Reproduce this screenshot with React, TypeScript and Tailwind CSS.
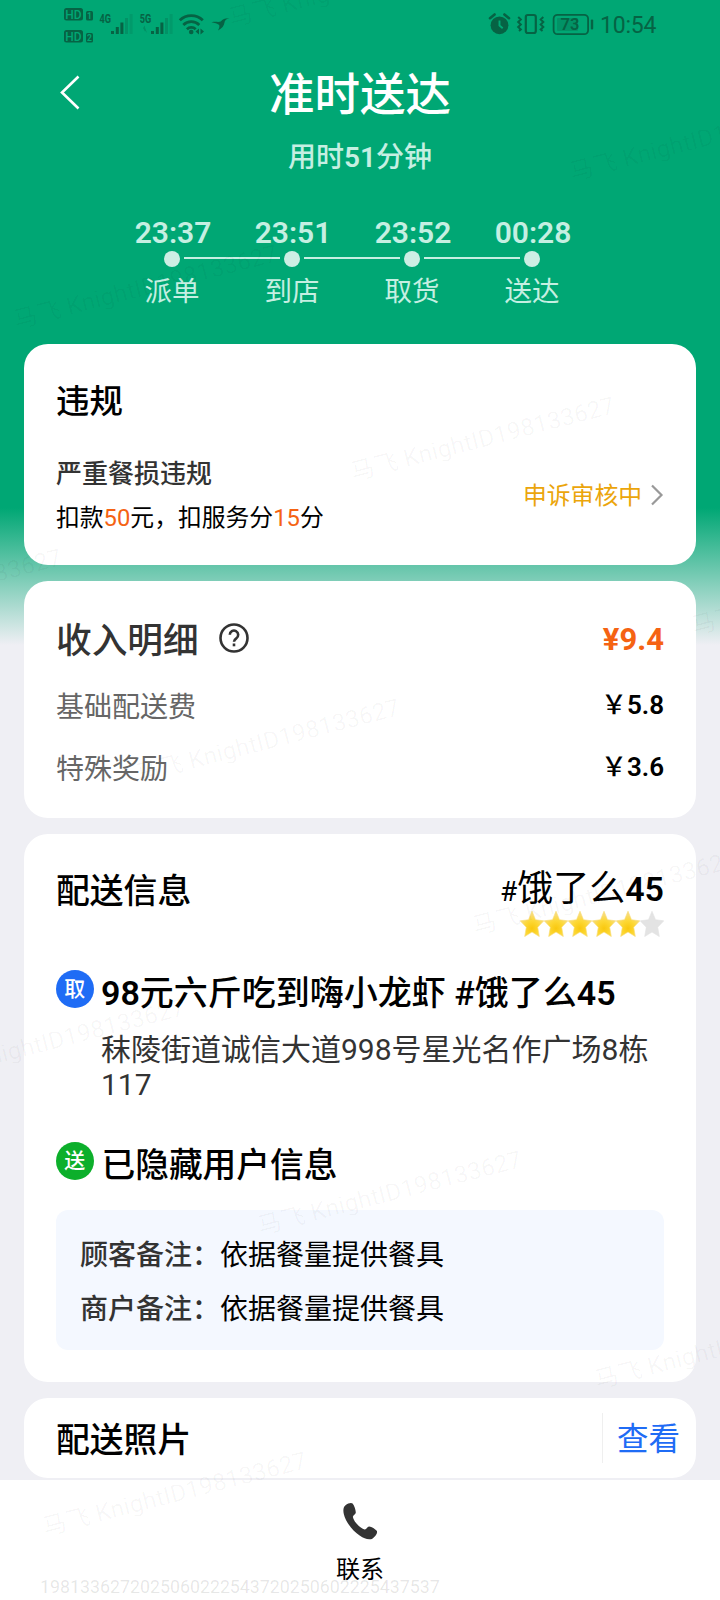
import React from "react";

const steps = [
  { time: "23:37", label: "派单" },
  { time: "23:51", label: "到店" },
  { time: "23:52", label: "取货" },
  { time: "00:28", label: "送达" },
];

const marks = [
  { x: 229, y: 19 },
  { x: 570, y: 173 },
  { x: 14, y: 321 },
  { x: 351, y: 473 },
  { x: -202, y: 625 },
  { x: 692, y: 627 },
  { x: 136, y: 775 },
  { x: 473, y: 927 },
  { x: -79, y: 1075 },
  { x: 258, y: 1227 },
  { x: 595, y: 1381 },
  { x: 43, y: 1528 },
];

const STAR = "M12 .2l3.500 7.500 8.300 1-6.100 5.700 1.600 8.200L12 18.600l-7.300 4 1.600-8.200L.2 8.700l8.300-1z";

function SignalBars({ x }: { x: number }) {
  return (
    <g>
      <rect x={x} y="31" width="3" height="3" />
      <rect x={x + 4.8} y="27" width="3" height="7" />
      <rect x={x + 9.4} y="22.5" width="3" height="11.5" />
      <rect x={x + 14} y="18" width="3" height="16" opacity=".3" />
      <rect x={x + 18.6} y="14" width="3" height="20" opacity=".18" />
    </g>
  );
}

function HdBadge({ y, sim }: { y: number; sim: string }) {
  return (
    <g>
      <rect x="64" y={y} width="19" height="12.5" rx="2.5" />
      <text x="73.5" y={y + 10.6} fontSize="12" fontWeight="500" textAnchor="middle" fill="#00a774">HD</text>
      <rect x="86" y={y + 3} width="7" height="9.5" rx="1.5" />
      <text x="89.5" y={y + 11} fontSize="8.5" fontWeight="700" textAnchor="middle" fill="#00a774">{sim}</text>
    </g>
  );
}

function StatusBar() {
  return (
    <div className="flex h-[60px] shrink-0 justify-between">
      <svg width="240" height="48" viewBox="0 0 240 48" fill="#066344" fontFamily="Roboto">
        <HdBadge y={8} sim="1" />
        <HdBadge y={30} sim="2" />
        <text x="99.5" y="23" fontSize="12.500" fontWeight="700" textLength="11.500" lengthAdjust="spacingAndGlyphs">4G</text>
        <SignalBars x={111} />
        <text x="139.800" y="23" fontSize="12.500" fontWeight="700" textLength="11.500" lengthAdjust="spacingAndGlyphs">5G</text>
        <path d="M143 28l2 -2.500v6zM147 33l-2 -2.500v-3z" opacity=".35" />
        <SignalBars x={151} />
        <g fill="none" stroke="#066344" strokeWidth="2.800">
          <path d="M179.800 20.300a16.500 16.500 0 0 1 23 0" />
          <path d="M183.300 24.900a11.500 11.500 0 0 1 16 0" />
          <path d="M186.900 29.200a6.400 6.400 0 0 1 8.800 0" />
        </g>
        <circle cx="191.200" cy="32" r="2.300" />
        <path d="M195.500 31.500l3.500-3v6zM204 31.500l-3.500-3v6z" />
        <path d="M211.500 22.300c4-1 7 .2 9.200-.8 2.300-2.800 5-3.500 8.800-3.200-3 .6-4.800 2-5 4.200-.4 3.200-2.500 6-6.500 8 1-2 1.800-3.700 1.200-5.500-2-1.500-4.500-2.200-7.700-2.700z" />
      </svg>
      <svg width="250" height="48" viewBox="470 0 250 48" fill="#066344" fontFamily="Roboto">
        <circle cx="499.500" cy="25.300" r="8.900" />
        <path d="M490 18.200l4.600-3.700M509 18.200l-4.600-3.700" stroke="#066344" strokeWidth="2.600" strokeLinecap="round" />
        <path d="M499.500 20.500v5l3.200 2.800" fill="none" stroke="#00a774" strokeWidth="1.900" />
        <rect x="525.800" y="15" width="10" height="18" rx="2" fill="none" stroke="#066344" strokeWidth="2.200" />
        <path d="M518.200 17l2.600 2.500-2.600 2.500 2.600 2.500-2.600 2.500 2.600 2.500-1.800 1.500M543.300 17l-2.600 2.500 2.600 2.500-2.600 2.500 2.600 2.500-2.600 2.500 1.800 1.500" fill="none" stroke="#066344" strokeWidth="2" />
        <rect x="553.600" y="14.800" width="34.500" height="19.400" rx="4" fill="none" stroke="#066344" strokeWidth="1.800" />
        <rect x="557" y="18" width="21" height="13" rx="1" opacity=".3" />
        <rect x="590.800" y="19.500" width="2.400" height="10" rx="1" />
        <text x="570" y="30.200" fontSize="16.500" fontWeight="600" textAnchor="middle">73</text>
        <text x="600" y="32.700" fontSize="23" textLength="56.500">10:54</text>
      </svg>
    </div>
  );
}

function Badge({ text, className }: { text: string; className: string }) {
  return (
    <span className={`flex size-[37.500px] shrink-0 items-center justify-center rounded-full pt-0.5 text-[21px] leading-none font-medium text-white ${className}`}>
      {text}
    </span>
  );
}

function Rating() {
  return (
    <div className="mt-px flex">
      {[0, 1, 2, 3, 4, 5].map((i) => (
        <svg key={i} width="24" height="26" viewBox="0 0 24 23" preserveAspectRatio="none">
          <defs>
            <radialGradient id="gold" cx=".5" cy=".68" r=".55">
              <stop offset="0" stopColor="#f9c80e" />
              <stop offset=".55" stopColor="#fdd835" />
              <stop offset="1" stopColor="#f8dc78" />
            </radialGradient>
          </defs>
          <path d={STAR} fill={i < 5 ? "url(#gold)" : "#e3e3e3"} stroke={i < 5 ? "#f8dc78" : "#e3e3e3"} strokeWidth=".6" />
        </svg>
      ))}
    </div>
  );
}

function FeeRow({ label, amount }: { label: string; amount: string }) {
  return (
    <div className="flex h-[62px] items-center justify-between">
      <span className="pt-1.5 text-[28px] text-[#666]">{label}</span>
      <span className="text-[26px] font-semibold">
        <span className="font-medium">￥</span>
        {amount}
      </span>
    </div>
  );
}

function NoteRow({ label, text }: { label: string; text: string }) {
  return (
    <div className="flex h-[54px] items-center text-[28px] whitespace-nowrap">
      <span className="font-medium text-[#333]">{label}</span>
      <span>{text}</span>
    </div>
  );
}

export default function App() {
  return (
    <div className="relative flex h-[1600px] w-[720px] flex-col overflow-hidden bg-[#efeff4] bg-[linear-gradient(180deg,#00a774_0px,#00a774_508px,#efeff4_645px)] font-[Roboto,'Noto_Sans_CJK_SC',sans-serif] leading-none text-black">
      <StatusBar />

      <header className="flex h-[284px] shrink-0 flex-col">
        <div className="flex h-[66px] items-center">
          <svg className="ml-[58px]" width="24" height="36" viewBox="0 0 24 36" fill="none" stroke="#fff" strokeWidth="2.600">
            <path d="M20.500 1.500L4 17.500l16.500 16" />
          </svg>
          <h1 className="mr-[82px] grow pt-1.5 text-center text-[45.500px] font-medium text-white">准时送达</h1>
        </div>
        <p className="mt-[17px] h-[30px] text-center text-[28px] leading-[30px] font-medium text-[#c5efe2]">
          用时<span className="font-semibold">51</span>分钟
        </p>
        <ol className="mt-[42px] ml-[112px] flex text-[#c5efe2]">
          {steps.map((s, i) => (
            <li key={s.time} className="flex w-[120px] flex-col items-center">
              <span className="ml-[2px] text-[30px] leading-[36px] font-semibold">{s.time}</span>
              <span className="flex h-4 w-full items-center pl-[52px]">
                <i className="size-4 shrink-0 rounded-full bg-[#cdeee4]" />
                {i < 3 && <i className="-mr-[48px] mb-[3px] ml-1 h-[2px] w-24 shrink-0 bg-[#c5efe2]" />}
              </span>
              <span className="mt-[10px] text-[27.500px] leading-[30px]">{s.label}</span>
            </li>
          ))}
        </ol>
      </header>

      <main className="flex grow flex-col gap-4 px-6">
        <section className="h-[221px] shrink-0 rounded-3xl bg-white px-8 pt-[38px]">
          <h2 className="text-[33.500px] leading-[40px] font-medium">违规</h2>
          <div className="mt-[29px] flex items-center justify-between">
            <div className="pt-px">
              <p className="text-[26px] leading-[44px] font-medium text-[#333]">严重餐损违规</p>
              <p className="text-[23.800px] leading-[44px]">
                扣款<span className="text-[#f56313]">50</span>元，扣服务分<span className="text-[#f56313]">15</span>分
              </p>
            </div>
            <div className="flex items-center text-[23.800px] text-[#eba50b]">
              <span className="pt-0.5">申诉审核中</span>
              <svg className="ml-[8px]" width="14" height="22" viewBox="0 0 14 22" fill="none" stroke="#999" strokeWidth="2.200">
                <path d="M2 1.500l9.500 9.500-9.500 9.500" />
              </svg>
            </div>
          </div>
        </section>

        <section className="h-[237px] shrink-0 rounded-3xl bg-white px-8 pt-[33px]">
          <div className="flex h-[50px] items-center justify-between">
            <h2 className="flex items-center text-[35.700px] font-medium text-[#333]">
              <span className="pt-[5px]">收入明细</span>
              <svg className="mb-px ml-[20px]" width="30" height="30" viewBox="0 0 30 30" fill="none" stroke="#333" strokeWidth="2.600">
                <circle cx="15" cy="15" r="13.500" />
                <path d="M10.800 11.800a4.200 4.200 0 1 1 6.500 3.500c-1.600 1-2.300 1.700-2.300 3.500" />
                <path d="M15 20.500v2.800" />
              </svg>
            </h2>
            <span className="text-[31px] font-bold text-[#f56313]">¥9.4</span>
          </div>
          <div className="mt-[10px]">
            <FeeRow label="基础配送费" amount="5.8" />
            <FeeRow label="特殊奖励" amount="3.6" />
          </div>
        </section>

        <section className="h-[548px] shrink-0 rounded-3xl bg-white px-8 pt-8">
          <div className="flex h-[70px] justify-between">
            <h2 className="pt-[6px] text-[33.800px] leading-[40px] font-medium">配送信息</h2>
            <div className="flex flex-col items-end">
              <p className="flex h-[44px] items-baseline pt-[3px] text-[36px] leading-[40px]">
                <span className="text-[28px]">#</span>饿了么<span className="text-[34px] font-semibold">45</span>
              </p>
              <Rating />
            </div>
          </div>

          <div className="mt-[32px] flex gap-[7.500px]">
            <Badge text="取" className="mt-[2px] bg-[#1f6cf5]" />
            <div className="min-w-0 grow">
              <h3 className="pt-[2px] text-[34px] leading-[46px] font-medium whitespace-nowrap">
                <span className="font-semibold">98</span>元六斤吃到嗨小龙虾 #饿了么<span className="font-semibold">45</span>
              </h3>
              <p className="mt-[16px] text-[30px] leading-[35px] text-[#333]">秣陵街道诚信大道998号星光名作广场8栋117</p>
            </div>
          </div>

          <div className="mt-[40px] flex gap-2">
            <Badge text="送" className="bg-[#0caf2b]" />
            <h3 className="pt-px text-[33.700px] leading-[46px] font-medium">已隐藏用户信息</h3>
          </div>

          <div className="mt-[21px] h-[140px] rounded-xl bg-[#f4f8ff] px-6 pt-[19px]">
            <NoteRow label="顾客备注：" text="依据餐量提供餐具" />
            <NoteRow label="商户备注：" text="依据餐量提供餐具" />
          </div>
        </section>

        <section className="flex h-20 shrink-0 items-center justify-between rounded-3xl bg-white pr-4 pl-8">
          <h2 className="pt-[5px] text-[33.800px] font-medium">配送照片</h2>
          <span className="flex h-[50px] items-center border-l border-[#efefef] pt-[4px] pl-[14px] text-[31.500px] text-[#1f6cf5]">查看</span>
        </section>
      </main>

      <footer className="flex h-[120px] shrink-0 flex-col items-center bg-white pt-[22px]">
        <svg width="36" height="38" viewBox="0 0 36 38" fill="#333">
          <path d="M3.500 3.200C6 1.200 9.500.4 10.600 1.600c1.600 2 3 6 3.200 8.700.1 1.900-3 2.600-2.900 4.600.4 4.100 7.400 11.700 11.700 12.500 2 .3 2.600-3 4.600-2.800 2.500.4 6 2.500 7.500 4.200 1.500 2-1.500 6-4 7.600-3.500 2-8.500.2-12.700-2.700C10 28.500 3.500 19.500 1.800 12 1 8.500 1.200 5.200 3.500 3.200z" />
        </svg>
        <span className="mt-[17px] text-2xl leading-[26px]">联系</span>
      </footer>

      <div className="pointer-events-none absolute inset-0 overflow-hidden">
        {marks.map((m) => (
          <span
            key={`${m.x}-${m.y}`}
            className="absolute origin-left -translate-y-1/2 -rotate-[14.500deg] text-2xl tracking-[0.300px] whitespace-nowrap text-black/[0.035]"
            style={{ left: m.x, top: m.y }}
          >
            马飞 KnightID198133627
          </span>
        ))}
        <span className="absolute top-[1577px] left-[40px] text-[17.800px] leading-5 whitespace-nowrap text-black/10">
          1981336272025060222543720250602225437537
        </span>
      </div>
    </div>
  );
}
